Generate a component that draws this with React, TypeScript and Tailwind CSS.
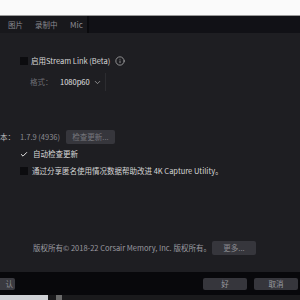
import { Check, Info, ChevronDown } from 'lucide-react';

const font = { fontFamily: '"Noto Sans CJK SC", "Noto Sans", sans-serif' };

function Box({ checked = false }: { checked?: boolean }) {
    return (
        <span className={`flex h-[8px] w-[8px] shrink-0 items-center justify-center ${checked ? '' : 'bg-[#0c0c0f]'}`}>
            {checked && <Check className="h-[9px] w-[9px] text-[#e6e6e6]" strokeWidth={3} />}
        </span>
    );
}

export default function App() {
    return (
        <div className="flex h-[300px] w-[300px] flex-col overflow-hidden whitespace-nowrap bg-[#1e1e22] text-[7.5px] leading-none text-[#d6d6d6]" style={font}>
            {/* top strip */}
            <div className="h-[16px] shrink-0 border-b border-[#9a9a9a] bg-[#fafafa]" />

            {/* tabs */}
            <div className="flex h-[17px] shrink-0 items-center bg-[#111116] text-[#8a8a90]">
                <div className="flex h-full items-center bg-[#18181c] pl-[8px] pr-[2px]">
                    <span className="w-[27px]">图片</span>
                    <span className="w-[35px]">录制中</span>
                    <span className="pr-[2px] text-[8px]">Mic</span>
                </div>
                <div className="h-full w-[2px] bg-[#0a0a0d]" />
            </div>

            {/* content */}
            <div className="flex flex-1 flex-col">
                <div className="mt-[23px] flex items-center gap-[3px] pl-[20px]">
                    <Box />
                    <span className="text-[#d8d8d8]">启用Stream Link (Beta)</span>
                    <Info className="ml-[2px] h-[10px] w-[10px] text-[#cfcfcf]" strokeWidth={1.5} />
                </div>
                <div className="mt-[7px] flex items-center pl-[30px]">
                    <span className="w-[28px] text-[#6e6e74]">格式：</span>
                    <div className="flex h-[18px] w-[48px] items-center justify-between border-r border-[#2c2c30] pl-[2px] pr-[3px] text-[#e2e2e2]">
                        <span>1080p60</span>
                        <ChevronDown className="h-[9px] w-[9px] text-[#aaaaaa]" />
                    </div>
                </div>

                <div className="mt-[39px] flex items-center">
                    <span className="w-[20px] text-[#bdbdbd]">本：</span>
                    <span className="w-[46px] text-[#8c8c92]">1.7.9 (4936)</span>
                    <span className="flex h-[14px] w-[49px] items-center justify-center rounded-[2px] bg-[#36363c] text-[#77777d]">检查更新...</span>
                </div>
                <div className="mt-[6px] flex items-center gap-[5px] pl-[20px]">
                    <Box checked />
                    <span>自动检查更新</span>
                </div>
                <div className="mt-[9px] flex items-center gap-[4px] pl-[20px]">
                    <Box />
                    <span>通过分享匿名使用情况数据帮助改进 4K Capture Utility。</span>
                </div>

                <div className="mt-auto mb-[17px] flex items-center pl-[33px]">
                    <span className="w-[179px] text-[#9a9aa0]">版权所有© 2018-22 Corsair Memory, Inc. 版权所有。</span>
                    <span className="flex h-[14px] w-[44px] items-center justify-center rounded-[2px] bg-[#36363c] text-[#8a8a90]">更多...</span>
                </div>
            </div>

            {/* footer */}
            <div className="flex h-[23px] shrink-0 items-center bg-[#08080b]">
                <span className="flex h-[12px] w-[15px] items-center justify-end rounded-r-[2px] bg-[#3a3a40] pr-[2px] text-[#8a8a90]">认</span>
                <span className="ml-auto flex h-[12px] w-[44px] items-center justify-center rounded-[2px] bg-[#36363c] text-[#9a9aa0]">好</span>
                <span className="ml-[7px] mr-[2px] flex h-[12px] w-[44px] items-center justify-center rounded-[2px] bg-[#36363c] text-[#9a9aa0]">取消</span>
            </div>
            <div className="flex h-[5px] shrink-0 bg-[#1a1a1c]">
                <div className="w-[48px] bg-[#cfd2d6]" />
                <div className="ml-[8px] w-[6px] bg-[#6a6a6a]" />
            </div>
        </div>
    );
}
